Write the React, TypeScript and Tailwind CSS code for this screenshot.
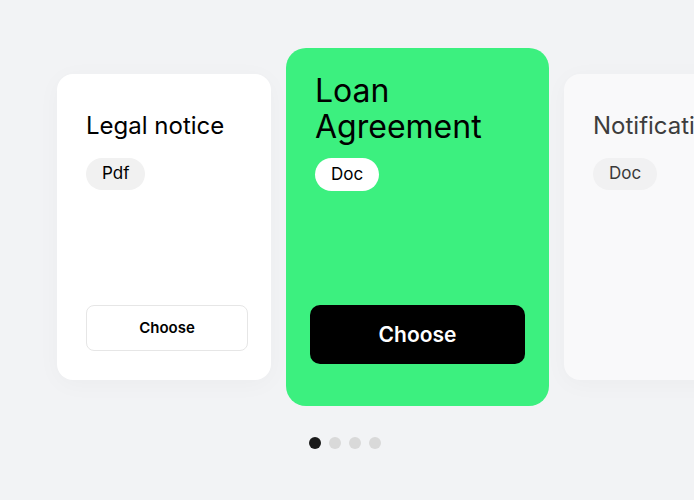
import React from 'react';

interface DocCardProps {
  title: string;
  kind: string;
  faded?: boolean;
}

const SideCard: React.FC<DocCardProps> = ({ title, kind, faded }) => {
  return (
    <div
      className={`shrink-0 w-[214px] h-[306px] rounded-[16px] flex flex-col pl-[29px] pr-[23px] pt-[37px] pb-[29px] shadow-[0_4px_24px_rgba(0,0,0,0.03)] ${
        faded ? 'bg-[#f9f9fa]' : 'bg-white'
      }`}
    >
      <h3
        className={`text-[24px] leading-[30px] font-normal whitespace-nowrap ${
          faded ? 'text-[#3d3d3d]' : 'text-black'
        }`}
      >
        {title}
      </h3>
      <span
        className={`mt-[17px] self-start h-[32px] px-[16px] rounded-full flex items-center text-[17px] ${
          faded ? 'bg-[#f1f1f2] text-[#3a3a3a]' : 'bg-[#f1f1f1] text-black'
        }`}
      >
        {kind}
      </span>
      {!faded && (
        <button className="mt-auto h-[46px] w-full rounded-[8px] bg-white border border-[#e6e6e6] text-[15px] font-semibold text-black">
          Choose
        </button>
      )}
    </div>
  );
};

const ActiveCard: React.FC<DocCardProps> = ({ title, kind }) => {
  return (
    <div className="shrink-0 w-[263px] h-[358px] rounded-[20px] bg-[#3cf07f] flex flex-col pl-[29px] pr-[24px] pt-[25px] pb-[42px]">
      <h2 className="text-[32px] leading-[36px] font-normal text-black w-[200px]">{title}</h2>
      <span className="mt-[13px] self-start h-[33px] px-[16px] rounded-full bg-white flex items-center text-[17px] text-black">
        {kind}
      </span>
      <button className="mt-auto -ml-[5px] h-[59px] w-[215px] rounded-[10px] bg-black text-white text-[21px] font-semibold">
        Choose
      </button>
    </div>
  );
};

export default function App() {
  return (
    <div className="w-[694px] h-[500px] overflow-hidden bg-[#f2f3f5] font-['Inter','Liberation_Sans',sans-serif]">
      <div className="flex items-center gap-[15px] pl-[57px] pt-[48px]">
        <SideCard title="Legal notice" kind="Pdf" />
        <ActiveCard title="Loan Agreement" kind="Doc" />
        <SideCard title="Notification" kind="Doc" faded />
      </div>
      <div className="flex justify-center gap-[8px] mt-[31px] pr-[4px]">
        <span className="w-[12px] h-[12px] rounded-full bg-[#1a1a1a]" />
        <span className="w-[12px] h-[12px] rounded-full bg-[#d9d9d9]" />
        <span className="w-[12px] h-[12px] rounded-full bg-[#d9d9d9]" />
        <span className="w-[12px] h-[12px] rounded-full bg-[#d9d9d9]" />
      </div>
    </div>
  );
}
